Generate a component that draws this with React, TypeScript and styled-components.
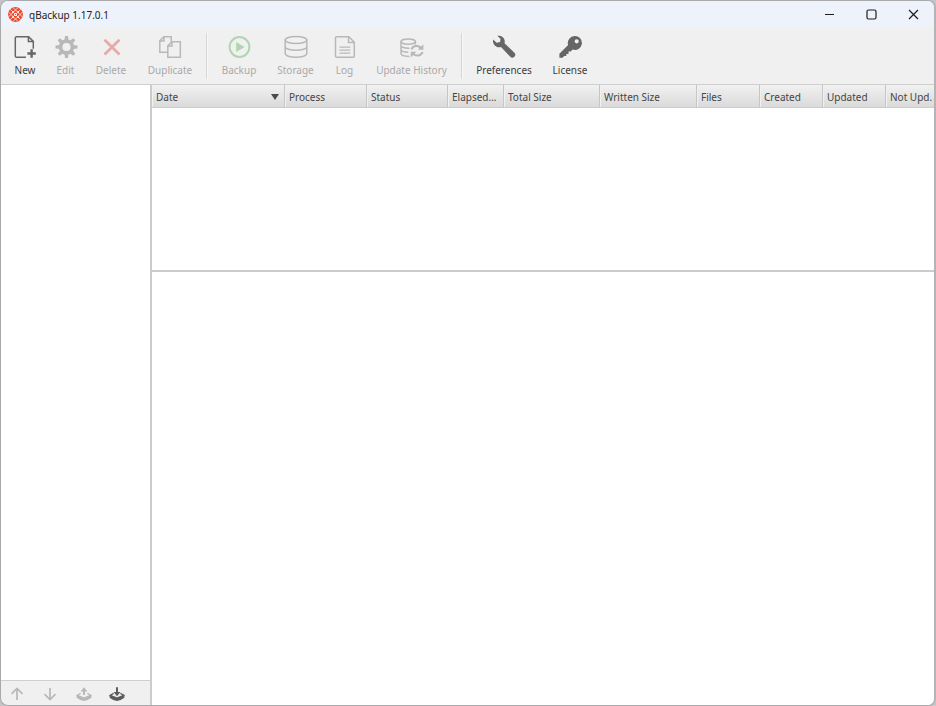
import React from "react";
import styled, { createGlobalStyle, css } from "styled-components";

const GlobalStyle = createGlobalStyle`
  *, *::before, *::after { box-sizing: border-box; }
  html, body, #root { height: 100%; }
  body { margin: 0; background: #c4c4c6; overflow: hidden; }
  body, button, table { font-family: "Noto Sans", "Open Sans", sans-serif; font-size: 10px; }
`;

const Window = styled.div`
  display: flex;
  flex-direction: column;
  height: 100vh;
  overflow: hidden;
  border: 1px solid #a9a9ab;
  border-right: 2px solid #b4b4b6;
  border-radius: 8px;
  background: #f0f0f0;
  color: #444;
`;

const TitleBar = styled.header`
  display: flex;
  align-items: center;
  flex: none;
  height: 27px;
  padding-left: 7px;
  background: #eef2fa;
`;

const Title = styled.h1`
  flex: 1;
  margin: 0 0 0 6px;
  font-size: 10px;
  font-weight: 400;
  line-height: 16px;
  color: #222;
`;

const plainButton = css`
  padding: 0;
  border: 0;
  background: transparent;
  color: inherit;
`;

const WindowButton = styled.button`
  ${plainButton}
  display: grid;
  place-items: center;
  width: 42px;
  height: 27px;
  color: #1c1c1c;
  &:hover { background: #dfe4ee; }
`;

const Toolbar = styled.div`
  display: flex;
  align-items: flex-start;
  flex: none;
  height: 57px;
  padding: 5px 0 0 3px;
  border-bottom: 1px solid #cfcfcf;
`;

const ToolButton = styled.button<{ $width: number }>`
  ${plainButton}
  display: flex;
  flex-direction: column;
  align-items: center;
  gap: 4px;
  width: ${(p) => p.$width}px;
  padding-top: 2px;
  line-height: 14px;
  white-space: nowrap;
  color: #3c3c3c;
  svg { display: block; color: #666; }
  &:disabled { color: #a9a9a9; }
  &:disabled svg { color: #b8b8b8; }
`;

const Separator = styled.div`
  width: 2px;
  height: 46px;
  margin: 0 3px;
  border-left: 1px solid #d6d6d6;
  border-right: 1px solid #f8f8f8;
`;

const Body = styled.main`
  display: flex;
  flex: 1;
  min-height: 0;
`;

const Sidebar = styled.aside`
  display: flex;
  flex-direction: column;
  flex: none;
  width: 151px;
  border-right: 2px solid #cccccc;
`;

const JobList = styled.div`
  flex: 1;
  background: #fff;
`;

const SidebarBar = styled.div`
  display: flex;
  align-items: center;
  height: 25px;
  padding-top: 1px;
  border-top: 1px solid #cfcfcf;
`;

const SmallButton = styled.button`
  ${plainButton}
  display: grid;
  place-items: center;
  width: 33px;
  height: 24px;
  color: #5c5c5c;
  &:disabled { color: #b8b8b8; }
`;

const Content = styled.section`
  display: flex;
  flex-direction: column;
  flex: 1;
  min-width: 0;
  background: #fff;
`;

const History = styled.div`
  flex: none;
  height: 187px;
  overflow: hidden;
  border-bottom: 2px solid #cccccc;
`;

const Table = styled.table`
  width: 100%;
  table-layout: fixed;
  border-collapse: separate;
  border-spacing: 0;
`;

const HeaderCell = styled.th<{ $width?: number }>`
  width: ${(p) => (p.$width ? `${p.$width}px` : "auto")};
  height: 23px;
  padding: 2px 0 0 4px;
  border-right: 1px solid #c6c6c6;
  border-bottom: 1px solid #cdcdcd;
  background: linear-gradient(#f1f1f1, #dadada);
  box-shadow: inset 1px 0 #f1f1f1;
  font-weight: 400;
  line-height: 16px;
  text-align: left;
  white-space: nowrap;
  &:last-child { border-right: 0; }
`;

const HeaderContent = styled.span`
  display: flex;
  align-items: center;
  justify-content: space-between;
`;

const SortMark = styled.svg`
  margin-right: 5px;
`;

const Details = styled.div`
  flex: 1;
`;

const Logo = () => (
  <svg width="15" height="15" viewBox="0 0 16 16" aria-hidden="true">
    <circle cx="8" cy="8" r="7.9" fill="#e84c30" />
    <g stroke="#fbe3de" strokeWidth="0.9" fill="none">
      <path d="M8 3.2 12.8 8 8 12.8 3.2 8Z" />
      <path d="M2.4 2.4 13.6 13.6M13.6 2.4 2.4 13.6" />
      <path d="M5.4 0.6 8 3.2l2.6-2.6M5.4 15.4 8 12.8l2.6 2.6M0.6 5.4 3.2 8 0.6 10.6M15.4 5.4 12.8 8l2.6 2.6" />
    </g>
    <g fill="#fff">
      <circle cx="8" cy="8" r="1.5" /><circle cx="5.2" cy="5.2" r="1" /><circle cx="10.8" cy="5.2" r="1" />
      <circle cx="5.2" cy="10.8" r="1" /><circle cx="10.8" cy="10.8" r="1" />
    </g>
    <circle cx="8" cy="8" r="0.6" fill="#e84c30" />
  </svg>
);

const Icon = ({ children }: { children: React.ReactNode }) => (
  <svg width="24" height="24" viewBox="0 0 24 24" fill="none" stroke="currentColor" strokeWidth="1.5" aria-hidden="true">
    {children}
  </svg>
);

const NewIcon = () => (
  <Icon>
    <path d="M13 22.2H3.6a1.3 1.3 0 0 1-1.3-1.3V3a1.3 1.3 0 0 1 1.3-1.3h12l4.7 4.7v7.4M15.4 1.8v4.8h4.8" />
    <path d="M18.6 14.3v8.4M14.4 18.5h8.4" strokeWidth="2.4" />
  </Icon>
);

const GearIcon = () => (
  <Icon>
    <circle cx="12.5" cy="12" r="5.9" strokeWidth="3.6" />
    {[0, 45, 90, 135, 180, 225, 270, 315].map((a) => (
      <path key={a} d="M10.4 5.6 11 1h3l.6 4.6Z" fill="currentColor" stroke="none" transform={`rotate(${a} 12.5 12)`} />
    ))}
  </Icon>
);

const DeleteIcon = () => (
  <Icon>
    <path d="M5.5 4.8 20.5 19.5M20.5 4.8 5.5 19.5" stroke="#e8aaa6" strokeWidth="2.8" />
  </Icon>
);

const DuplicateIcon = () => (
  <Icon>
    <path d="M9.7 17.3H1.8V5.8L5.8 1.7h7.4v4.9M6 1.8V6H1.9" />
    <path d="M9.8 10.8 13.9 6.7h8.4v15.6H9.8ZM14 6.8V11H9.9" />
  </Icon>
);

const BackupIcon = () => (
  <Icon>
    <g stroke="#afd6b0" fill="#afd6b0">
      <circle cx="12.5" cy="12" r="9.9" fill="none" strokeWidth="2" />
      <path d="M9.2 7 17.6 12l-8.4 5Z" stroke="none" />
    </g>
  </Icon>
);

const StorageIcon = () => (
  <Icon>
    <ellipse cx="12" cy="5" rx="10.8" ry="3.6" />
    <path d="M1.2 5v13.6c0 2 4.8 3.7 10.8 3.7s10.8-1.7 10.8-3.7V5M1.2 11.7c0 2 4.8 3.6 10.8 3.6s10.8-1.6 10.8-3.6" />
  </Icon>
);

const LogIcon = () => (
  <Icon>
    <path d="M3.5 1.7H15.8L21.3 7.2V21a1.2 1.2 0 0 1-1.2 1.2H3.7A1.2 1.2 0 0 1 2.5 21V2.7a1 1 0 0 1 1-1ZM15.5 1.8v5.6h5.7" />
    <path d="M6.4 12.1h10.9M6.4 15.1h10.9M6.4 18.1h10.9" strokeWidth="1.4" />
  </Icon>
);

const UpdateIcon = () => (
  <Icon>
    <ellipse cx="8.2" cy="6.6" rx="7.2" ry="2.6" />
    <path d="M1 6.600v12c0 1.600 3.300 2.800 8.400 2.800M15.400 6.600v3M1 10.700c0 1.500 3.300 2.600 8.400 2.500M1 14.600c0 1.500 3.100 2.600 7.200 2.600" />
    <path d="M11.500 14.600c1-4 6.700-4.800 9.600-1.600M22.600 17c-1.200 4-6.900 4.600-9.600 1.600" strokeWidth="2" />
    <path d="M23.400 9.200v5.600h-5.600ZM10.800 22.400v-5.600h5.600Z" fill="currentColor" stroke="none" />
  </Icon>
);

const WrenchIcon = () => (
  <Icon>
    <path
      d="M1 4.600 4.700 7.800 8.100 7 8.500 3.800 5.200 0.800C8.700 0 12.300 2.100 12.700 5.700c.1.900 0 1.600-.2 2.500L22.400 17.700a2.900 2.900 0 0 1-4.100 4.100L9 12.100C5.300 13.200 1.300 10.400 1 6.500Z"
      fill="currentColor"
      stroke="none"
    />
  </Icon>
);

const KeyIcon = () => (
  <Icon>
    <path
      fillRule="evenodd"
      d="M16.700 1a7 7 0 1 1-2.100 13.600l-1.900 2h-2.200v2.300H8.300v2.200H6.100L4.700 22.700H1.400v-3.900L10.100 10.100A7 7 0 0 1 16.700 1Zm2 3.200a2.100 2.100 0 1 0 0 4.200 2.100 2.100 0 0 0 0-4.200Z"
      fill="currentColor"
      stroke="none"
    />
  </Icon>
);

const ArrowIcon = ({ down = false }: { down?: boolean }) => (
  <svg width="15" height="14" viewBox="0 0 15 14" fill="none" stroke="currentColor" strokeWidth="1.7" aria-hidden="true">
    <path d={down ? "M7 1v11.500M1.500 7.200 7 12.500l5.500-5.300" : "M7 13V1.500M1.500 6.800 7 1.500l5.500 5.300"} />
  </svg>
);

const TrayIcon = ({ down = false }: { down?: boolean }) => (
  <svg width="16" height="14" viewBox="0 0 16 14" fill="none" stroke="currentColor" aria-hidden="true">
    <path d="M4.600 6.400 1.300 8.300 8 11.200l6.700-2.900L11.400 6.400" strokeWidth="1.300" />
    <path d="M.6 8.100v2.700Q4.500 13.900 8 13.900t7.400-3.100V8.100L8 11.100Z" fill="currentColor" stroke="none" />
    <path d="M8 2v5.800" strokeWidth="2" />
    <path d={down ? "M4.600 5h6.800L8 9.200Z" : "M4.600 4.400h6.800L8 .2Z"} fill="currentColor" stroke="none" />
    {down && <path d="M8 .3v3" strokeWidth="2" />}
  </svg>
);

type Tool = { label: string; width: number; icon: React.ReactNode; enabled?: boolean };

const toolGroups: Tool[][] = [
  [
    { label: "New", width: 42, icon: <NewIcon />, enabled: true },
    { label: "Edit", width: 39, icon: <GearIcon /> },
    { label: "Delete", width: 52, icon: <DeleteIcon /> },
    { label: "Duplicate", width: 66, icon: <DuplicateIcon /> },
  ],
  [
    { label: "Backup", width: 56, icon: <BackupIcon /> },
    { label: "Storage", width: 57, icon: <StorageIcon /> },
    { label: "Log", width: 41, icon: <LogIcon /> },
    { label: "Update History", width: 93, icon: <UpdateIcon /> },
  ],
  [
    { label: "Preferences", width: 76, icon: <WrenchIcon />, enabled: true },
    { label: "License", width: 56, icon: <KeyIcon />, enabled: true },
  ],
];

const columns: { label: string; width?: number; sorted?: boolean }[] = [
  { label: "Date", width: 133, sorted: true },
  { label: "Process", width: 82 },
  { label: "Status", width: 81 },
  { label: "Elapsed...", width: 56 },
  { label: "Total Size", width: 96 },
  { label: "Written Size", width: 97 },
  { label: "Files", width: 63 },
  { label: "Created", width: 63 },
  { label: "Updated", width: 63 },
  { label: "Not Upd." },
];

export default function App() {
  return (
    <>
      <GlobalStyle />
      <Window>
        <TitleBar>
          <Logo />
          <Title>qBackup 1.17.0.1</Title>
          <WindowButton aria-label="Minimize">
            <svg width="11" height="11" viewBox="0 0 11 11" stroke="currentColor"><path d="M1 5.500h9" /></svg>
          </WindowButton>
          <WindowButton aria-label="Maximize">
            <svg width="11" height="11" viewBox="0 0 11 11" fill="none" stroke="currentColor"><rect x="1" y="1" width="9" height="9" rx="1.500" strokeWidth="1.200" /></svg>
          </WindowButton>
          <WindowButton aria-label="Close">
            <svg width="11" height="11" viewBox="0 0 11 11" stroke="currentColor"><path d="M1 1l9 9M10 1l-9 9" strokeWidth="1.200" /></svg>
          </WindowButton>
        </TitleBar>
        <Toolbar role="toolbar">
          {toolGroups.map((group, i) => (
            <React.Fragment key={i}>
              {i > 0 && <Separator />}
              {group.map((tool) => (
                <ToolButton key={tool.label} $width={tool.width} disabled={!tool.enabled}>
                  {tool.icon}
                  {tool.label}
                </ToolButton>
              ))}
            </React.Fragment>
          ))}
        </Toolbar>
        <Body>
          <Sidebar>
            <JobList />
            <SidebarBar>
              <SmallButton aria-label="Move up" disabled><ArrowIcon /></SmallButton>
              <SmallButton aria-label="Move down" disabled><ArrowIcon down /></SmallButton>
              <SmallButton aria-label="Export" disabled><TrayIcon /></SmallButton>
              <SmallButton aria-label="Import"><TrayIcon down /></SmallButton>
            </SidebarBar>
          </Sidebar>
          <Content>
            <History>
              <Table>
                <thead>
                  <tr>
                    {columns.map((c) => (
                      <HeaderCell key={c.label} $width={c.width} scope="col" aria-sort={c.sorted ? "descending" : undefined}>
                        <HeaderContent>
                          {c.label}
                          {c.sorted && (
                            <SortMark width="8" height="6" viewBox="0 0 8 6" aria-hidden="true"><path d="M0 0h8L4 6Z" fill="#4a4a4a" /></SortMark>
                          )}
                        </HeaderContent>
                      </HeaderCell>
                    ))}
                  </tr>
                </thead>
              </Table>
            </History>
            <Details />
          </Content>
        </Body>
      </Window>
    </>
  );
}
